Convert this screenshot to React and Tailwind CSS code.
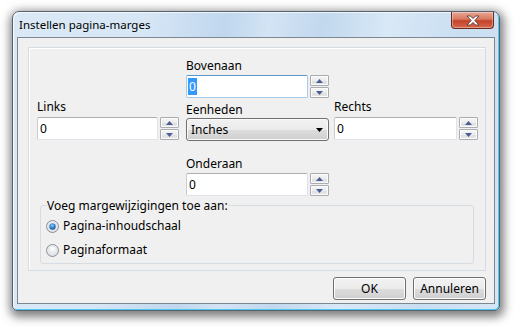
import React from "react";

const FONT = { fontFamily: '"Noto Sans", "Open Sans", sans-serif' };

const SpinButton = ({ up }) => (
  <div className="flex h-[11px] w-full items-center justify-center rounded-[1px] border border-[#a9adb2] bg-[linear-gradient(to_bottom,#f6f6f6_0%,#ececec_50%,#dfdfdf_51%,#e6e6e6_100%)] shadow-[inset_0_0_0_1px_#fbfbfb]">
    <svg width="7" height="4" viewBox="0 0 7 4">
      {up ? (
        <path d="M0 4 L3.5 0 L7 4 Z" fill="#4a5d95" />
      ) : (
        <path d="M0 0 L7 0 L3.5 4 Z" fill="#4a5d95" />
      )}
    </svg>
  </div>
);

const Spinner = () => (
  <div className="ml-[2px] flex h-[23px] w-[19px] flex-col gap-px">
    <SpinButton up />
    <SpinButton />
  </div>
);

// Vista style spin edit: textbox + up/down buttons
const SpinField = ({ focused, width = "w-[122px]" }) => (
  <div className="flex h-[23px] items-center">
    <div
      className={
        focused
          ? `flex h-[23px] ${width} items-center rounded-[2px] border border-[#a5cbe6] border-t-[#5a96c8] bg-white pl-[1px]`
          : `flex h-[23px] ${width} items-center rounded-[2px] border border-[#dfe2e8] border-t-[#abadb3] border-l-[#c9ccd2] bg-white pl-[2px]`
      }
    >
      {focused ? (
        <span className="flex h-[17px] items-center bg-[#3399ff] px-[1px] text-white">0</span>
      ) : (
        <span className="text-black">0</span>
      )}
    </div>
    <Spinner />
  </div>
);

const Label = ({ children, className = "" }) => (
  <div className={`h-[15px] leading-[15px] text-black ${className}`}>{children}</div>
);

const Radio = ({ checked }) => (
  <svg width="13" height="13" viewBox="0 0 13 13">
    <defs>
      <radialGradient id={checked ? "rg1" : "rg0"} cx="50%" cy="35%" r="65%">
        <stop offset="0%" stopColor="#ffffff" />
        <stop offset="100%" stopColor="#d6d9dd" />
      </radialGradient>
      <radialGradient id="dot" cx="45%" cy="35%" r="70%">
        <stop offset="0%" stopColor="#8ed2fb" />
        <stop offset="60%" stopColor="#2a7cc4" />
        <stop offset="100%" stopColor="#1a4f8a" />
      </radialGradient>
    </defs>
    <circle cx="6.5" cy="6.5" r="6" fill={`url(#${checked ? "rg1" : "rg0"})`} stroke="#8d9095" strokeWidth="1" />
    <circle cx="6.5" cy="6.5" r="4.5" fill="none" stroke="#e4e6e8" strokeWidth="1" />
    {checked && <circle cx="6.5" cy="6.5" r="3.2" fill="url(#dot)" />}
  </svg>
);

const Button = ({ children }) => (
  <button className="flex h-[23px] w-[73px] items-center justify-center rounded-[3px] border border-[#707070] bg-[linear-gradient(to_bottom,#f2f2f2_0%,#ebebeb_50%,#dddddd_51%,#cfcfcf_100%)] text-[12px] text-black shadow-[inset_0_0_0_1px_#fbfbfb]">
    {children}
  </button>
);

export default function App() {
  return (
    <div className="h-[327px] w-[515px] bg-white pl-[12px] pt-[11px] text-[12px]" style={FONT}>
      {/* window frame */}
      <div className="flex h-[300px] w-[488px] flex-col rounded-t-[7px] rounded-b-[5px] border border-[#56626e] bg-[linear-gradient(100deg,#dbe9f6_0%,#d6e6f5_25%,#c0d7ee_40%,#d3e4f4_48%,#c2d8ee_58%,#d8e8f6_70%,#c9def2_85%,#d6e6f5_100%)] shadow-[inset_-1px_-1px_0_#4ec9f3,inset_1px_1px_0_rgba(255,255,255,0.7),1px_3px_10px_3px_rgba(0,0,0,0.5)]">
        {/* title bar */}
        <div className="flex h-[25px] items-start justify-between">
          <div className="pl-[6px] pt-[5px] text-[11.5px] leading-[15px] text-black">Instellen pagina-marges</div>
          <div className="mr-[5px] flex h-[17px] w-[43px] items-center justify-center rounded-b-[4px] border border-t-0 border-[#6b2a1e] bg-[linear-gradient(to_bottom,#e8a897_0%,#d9775f_45%,#c5412a_55%,#d4684c_100%)] shadow-[inset_0_0_0_1px_rgba(255,255,255,0.35)]">
            <svg width="14" height="11" viewBox="0 0 14 11">
              <path
                d="M1 1 L4.5 1 L7 3.6 L9.5 1 L13 1 L8.8 5.5 L13 10 L9.5 10 L7 7.4 L4.5 10 L1 10 L5.2 5.5 Z"
                fill="#ffffff"
                stroke="#5a3a34"
                strokeWidth="0.9"
                strokeLinejoin="round"
              />
            </svg>
          </div>
        </div>

        {/* client area */}
        <div className="mx-[4px] mb-[6px] flex flex-1 flex-col border border-[#7c8793] bg-[#f0f0f0] pl-[10px] pr-[8px] pt-[9px]">
          {/* panel */}
          <div className="flex h-[224px] flex-col border border-[#d5dce2] shadow-[inset_1px_1px_0_#ffffff]">
            <div className="flex pl-[8px] pt-[10px]">
              {/* left */}
              <div className="mt-[41px] flex w-[142px] flex-col">
                <Label>Links</Label>
                <div className="mt-[3px]">
                  <SpinField />
                </div>
              </div>

              {/* middle */}
              <div className="ml-[7px] flex w-[143px] flex-col">
                <Label>Bovenaan</Label>
                <div className="mt-[2px]">
                  <SpinField focused />
                </div>
                <Label className="mt-[4px]">Eenheden</Label>
                <div className="mt-[1px] flex h-[23px] w-[143px] items-center justify-between rounded-[3px] border border-[#707070] bg-[linear-gradient(to_bottom,#f2f2f2_0%,#ebebeb_50%,#dddddd_51%,#cfcfcf_100%)] pl-[4px] pr-[5px] shadow-[inset_0_0_0_1px_#fbfbfb]">
                  <span className="text-black">Inches</span>
                  <svg width="7" height="4" viewBox="0 0 7 4">
                    <path d="M0 0 L7 0 L3.5 4 Z" fill="#000" />
                  </svg>
                </div>
                <Label className="mt-[15px]">Onderaan</Label>
                <div className="mt-[2px]">
                  <SpinField />
                </div>
              </div>

              {/* right */}
              <div className="ml-[5px] mt-[41px] flex flex-col">
                <Label>Rechts</Label>
                <div className="mt-[3px]">
                  <SpinField width="w-[123px]" />
                </div>
              </div>
            </div>

            {/* group box */}
            <fieldset className="mx-[11px] mt-[2px] rounded-[3px] border border-[#d5dce2] pb-[4px]">
              <legend className="ml-[6px] leading-[15px] text-black">Voeg margewijzigingen toe aan:</legend>
              <div className="ml-[5px] mt-[4px] flex h-[18px] items-center gap-[4px]">
                <Radio checked />
                <span className="text-black">Pagina-inhoudschaal</span>
              </div>
              <div className="ml-[5px] mt-[6px] flex h-[18px] items-center gap-[4px]">
                <Radio />
                <span className="text-black">Paginaformaat</span>
              </div>
            </fieldset>
          </div>

          {/* buttons */}
          <div className="mt-[6px] flex justify-end gap-[7px]">
            <Button>OK</Button>
            <Button>Annuleren</Button>
          </div>
        </div>
      </div>
    </div>
  );
}
